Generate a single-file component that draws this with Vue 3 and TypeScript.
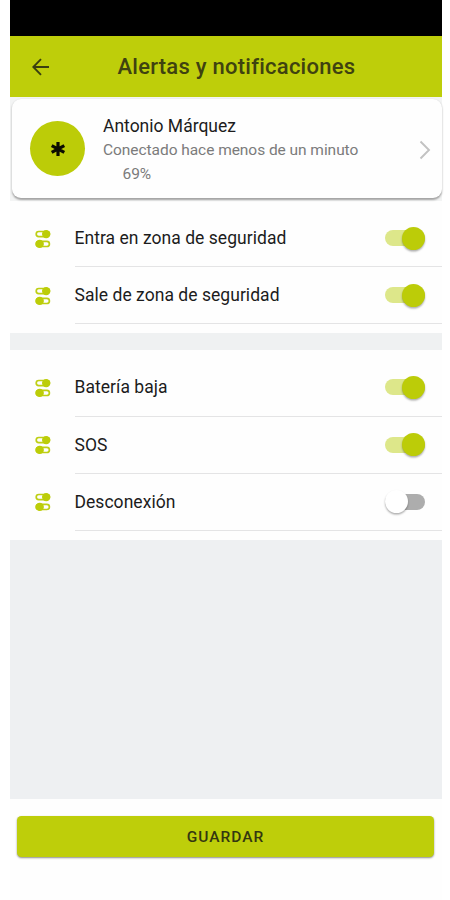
<script setup lang="ts">
import { reactive } from 'vue'

interface AlertOption {
  id: string
  label: string
  enabled: boolean
}

const groups = reactive<AlertOption[][]>([
  [
    { id: 'enter', label: 'Entra en zona de seguridad', enabled: true },
    { id: 'leave', label: 'Sale de zona de seguridad', enabled: true },
  ],
  [
    { id: 'battery', label: 'Batería baja', enabled: true },
    { id: 'sos', label: 'SOS', enabled: true },
    { id: 'offline', label: 'Desconexión', enabled: false },
  ],
])
</script>

<template>
  <main class="screen">
    <div class="status-bar"></div>
    <header class="toolbar">
      <svg class="back" viewBox="0 0 18 18">
        <path d="M17 9H1.5M9 1.2L1.3 9L9 16.8" />
      </svg>
      <h1 class="title">Alertas y notificaciones</h1>
    </header>

    <div class="card-wrap">
      <section class="card">
        <div class="avatar">
          <svg viewBox="0 0 16 16">
            <path d="M8 1V15M1.7 4.6L14.3 11.4M14.3 4.6L1.7 11.4" />
          </svg>
        </div>
        <div class="info">
          <div class="name">Antonio Márquez</div>
          <div class="state">Conectado hace menos de un minuto</div>
          <div class="battery">69%</div>
        </div>
        <svg class="chevron" viewBox="0 0 12 20">
          <path d="M1.5 1.5L10 10L1.5 18.5" />
        </svg>
      </section>
    </div>

    <section v-for="(group, i) in groups" :key="i" class="group">
      <div v-for="option in group" :key="option.id" class="row">
        <svg class="option-icon" viewBox="0 0 16 20">
          <rect x="1.2" y="2.5" width="13.2" height="5.2" rx="2.6" />
          <circle cx="11.2" cy="5.1" r="4.2" />
          <rect x="1.2" y="12.3" width="13.2" height="5.2" rx="2.6" />
          <circle cx="4.7" cy="14.9" r="4.2" />
        </svg>
        <div class="row-body">
          <span class="label">{{ option.label }}</span>
          <button
            class="toggle"
            :class="{ on: option.enabled }"
            role="switch"
            :aria-checked="option.enabled"
            @click="option.enabled = !option.enabled"
          >
            <span class="knob"></span>
          </button>
        </div>
      </div>
    </section>

    <div class="filler"></div>
    <footer class="footer">
      <button class="save">GUARDAR</button>
    </footer>
  </main>
</template>

<style>
body {
  background: #fff;
}
</style>

<style scoped>
.screen {
  box-sizing: border-box;
  width: 432px;
  height: 900px;
  margin-left: 9.5px;
  display: flex;
  flex-direction: column;
  font-family: Roboto, sans-serif;
  color: #1c1c1c;
  background: #fefefe;
}
.status-bar {
  height: 36px;
  flex: none;
  background: #000;
}
.toolbar {
  height: 61.4px;
  flex: none;
  display: flex;
  align-items: center;
  background: #bece0a;
}
.back {
  width: 18px;
  height: 18px;
  margin-left: 22px;
  fill: none;
  stroke: #3a3f10;
  stroke-width: 1.9;
}
.title {
  margin: 0 0 0 68px;
  font-size: 22px;
  line-height: 28px;
  font-weight: 500;
  letter-spacing: 0.25px;
  color: #3f4210;
  white-space: nowrap;
}
.card-wrap {
  height: 103.6px;
  flex: none;
  box-sizing: border-box;
  padding: 1.6px 0 0 2.5px;
  background: #f3f4f4;
}
.card {
  box-sizing: border-box;
  height: 98.8px;
  display: flex;
  align-items: flex-start;
  border-radius: 9px;
  background: #fefefe;
  box-shadow: 0 1.5px 2px #a3a3a3;
}
.avatar {
  width: 55px;
  height: 55px;
  margin: 22.5px 0 0 18px;
  display: flex;
  align-items: center;
  justify-content: center;
  border-radius: 50%;
  background: #bccc08;
}
.avatar svg {
  width: 16px;
  height: 16px;
  fill: none;
  stroke: #0c0d00;
  stroke-width: 3.2;
}
.info {
  flex: 1;
  margin: 15px 0 0 18px;
  white-space: nowrap;
}
.name {
  font-size: 17.5px;
  line-height: 24px;
}
.state,
.battery {
  font-size: 15.5px;
  line-height: 24px;
  letter-spacing: -0.05px;
  color: #7b7b7b;
}
.battery {
  padding-left: 19.5px;
}
.chevron {
  width: 12px;
  height: 20px;
  margin: 41px 11px 0 0;
  fill: none;
  stroke: #c2c2c2;
  stroke-width: 1.9;
}
.group {
  flex: none;
  padding: 9px 0 8.5px;
}
.group + .group {
  padding: 9.5px 0 9px;
  border-top: 17px solid #eff1f2;
}
.row {
  height: 57.2px;
  display: flex;
  align-items: center;
  padding-left: 25.5px;
}
.option-icon {
  width: 16px;
  height: 20px;
  fill: none;
  stroke: #becf14;
  stroke-width: 1.7;
}
.option-icon circle {
  fill: #bccd08;
  stroke: none;
}
.row-body {
  box-sizing: border-box;
  flex: 1;
  height: 100%;
  margin-left: 23.5px;
  display: flex;
  align-items: center;
  justify-content: space-between;
  padding-right: 17px;
  border-bottom: 1.5px solid #e4e4e5;
}
.label {
  font-size: 17.5px;
  line-height: 24px;
  letter-spacing: 0.04px;
}
.toggle {
  width: 40px;
  height: 16px;
  padding: 0;
  display: flex;
  align-items: center;
  border: 0;
  border-radius: 8px;
  background: #adadad;
}
.knob {
  width: 23px;
  height: 23px;
  flex: none;
  border-radius: 50%;
  background: #fff;
  box-shadow: 0 1.5px 2px rgba(0, 0, 0, 0.32);
}
.toggle.on {
  justify-content: flex-end;
  background: #dde78a;
}
.toggle.on .knob {
  background: #bccc08;
}
.filler {
  flex: 1;
  background: #eef0f2;
}
.footer {
  height: 101px;
  flex: none;
  box-sizing: border-box;
  padding: 17.2px 7.5px 0 7.5px;
}
.save {
  width: 100%;
  height: 40.8px;
  display: block;
  padding: 0;
  border: 0;
  border-radius: 4.5px;
  background: #bece0a;
  box-shadow: 0 1px 2px rgba(0, 0, 0, 0.45);
  font-family: Roboto, sans-serif;
  font-size: 15.5px;
  font-weight: 500;
  letter-spacing: 1px;
  color: #343710;
}
</style>
